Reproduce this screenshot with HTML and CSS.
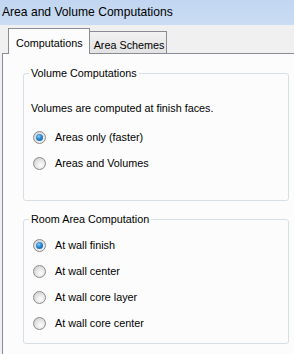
FILE: index.html
```html
<!DOCTYPE html>
<html>
<head>
<meta charset="utf-8">
<link rel="stylesheet" href="styles.css">
</head>
<body>
<div class="titlebar">Area and Volume Computations</div>
<div class="tabs">
  <div class="tab active">Computations</div>
  <div class="tab">Area Schemes</div>
</div>
<div class="panel">
  <div class="group g1">
    <span class="legend">Volume Computations</span>
    <div class="row text">Volumes are computed at finish faces.</div>
    <div class="row"><span class="radio checked"></span><span>Areas only (faster)</span></div>
    <div class="row"><span class="radio"></span><span>Areas and Volumes</span></div>
  </div>
  <div class="group g2">
    <span class="legend">Room Area Computation</span>
    <div class="row"><span class="radio checked"></span><span>At wall finish</span></div>
    <div class="row"><span class="radio"></span><span>At wall center</span></div>
    <div class="row"><span class="radio"></span><span>At wall core layer</span></div>
    <div class="row"><span class="radio"></span><span>At wall core center</span></div>
  </div>
</div>
</body>
</html>
```
FILE: styles.css
```css
html, body {
  margin: 0;
  padding: 0;
}
body {
  width: 294px;
  height: 354px;
  overflow: hidden;
  background: #f0f0f0;
  font-family: "Liberation Sans", Arial, sans-serif;
  font-size: 10.8px;
  color: #000;
}
.titlebar {
  height: 25px;
  line-height: 25px;
  padding-left: 2px;
  background: linear-gradient(#c2d6f1, #cadcf3);
  font-size: 12.1px;
}
.tabs {
  display: flex;
  align-items: flex-end;
  padding-top: 3px;
  padding-left: 8px;
  height: 25px;
}
.tab {
  box-sizing: border-box;
  height: 22px;
  padding: 5px 2px 0 4px;
  line-height: 17px;
  border: 1px solid #898c95;
  border-bottom: none;
  border-left: none;
  background: linear-gradient(#f2f2f2, #e3e3e3);
}
.tab.active {
  height: 26px;
  padding: 0 6px 0 7px;
  line-height: 28px;
  background: #fcfcfc;
  margin-bottom: -1px;
  position: relative;
  z-index: 1;
  border-left: 1px solid #898c95;
}
.panel {
  box-sizing: border-box;
  margin-left: 2px;
  border-top: 1px solid #898c95;
  border-left: 1px solid #898c95;
  background: #fcfcfc;
  height: 301px;
  padding: 19px 0 0 20px;
}
.group {
  box-sizing: border-box;
  position: relative;
  width: 266px;
  border: 1px solid #d5dfe5;
  border-radius: 3px;
  padding-left: 9px;
}
.g1 {
  height: 128px;
  padding-top: 21px;
}
.g2 {
  height: 125px;
  margin-top: 18px;
  padding-top: 12px;
}
.legend {
  position: absolute;
  top: -8px;
  left: 5px;
  padding: 0 2px;
  line-height: 15px;
  background: #fcfcfc;
}
.row {
  display: flex;
  align-items: center;
  height: 26px;
  gap: 9px;
}
.row.text {
  margin-left: -2px;
  margin-bottom: 3px;
}
.radio {
  box-sizing: border-box;
  width: 13px;
  height: 13px;
  border-radius: 50%;
  border: 1px solid #8b8b8b;
  background: radial-gradient(circle at 60% 65%, #fdfdfd 0, #e6e6e6 45%, #c9c9c9 100%);
  position: relative;
  flex: none;
}
.radio.checked::after {
  content: "";
  position: absolute;
  left: 2px;
  top: 2px;
  width: 7px;
  height: 7px;
  border-radius: 50%;
  background: radial-gradient(circle at 40% 35%, #8fd0ff 0, #2b8bd6 40%, #0b4f8c 100%);
}
```
